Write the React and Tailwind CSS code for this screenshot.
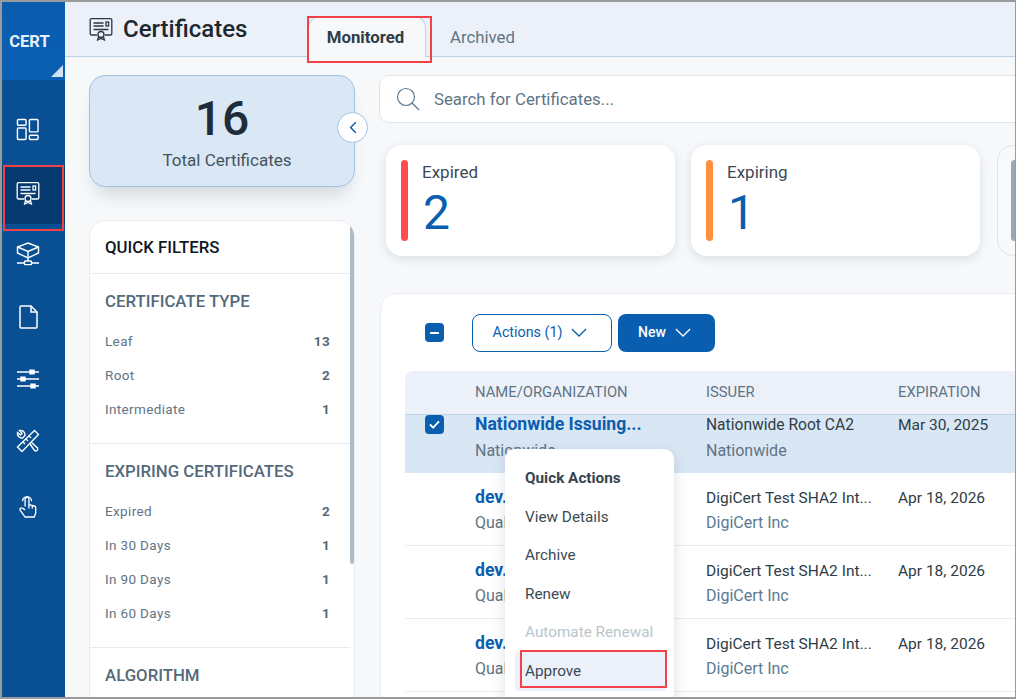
import React from "react";

const FONT = "font-['Roboto','Liberation_Sans',sans-serif]";

function CertIcon({ className }) {
  return (
    <svg viewBox="0 0 24 24" fill="none" stroke="currentColor" strokeWidth="1.3" className={className}>
      <path d="M8 18H2.5a1.3 1.3 0 0 1-1.3-1.3V3a1.3 1.3 0 0 1 1.3-1.3h19A1.3 1.3 0 0 1 22.8 3v13.7a1.3 1.3 0 0 1-1.3 1.3H16" />
      <path d="M4.5 6h10M4.5 9h10M4.5 12.5h15" />
      <rect x="17" y="5" width="2.6" height="4" />
      <circle cx="12" cy="17.5" r="3" />
      <path d="M9.6 19.5 8.6 23l3.4-1.5 3.4 1.5-1-3.5" />
    </svg>
  );
}

function DashIcon({ className }) {
  return (
    <svg viewBox="0 0 24 24" fill="none" stroke="currentColor" strokeWidth="1.5" className={className}>
      <rect x="1.5" y="1.5" width="9" height="6" rx="1" />
      <rect x="1.5" y="10.5" width="9" height="12" rx="1" />
      <rect x="14" y="1.5" width="9" height="13" rx="1" />
      <rect x="14" y="18" width="9" height="4.5" rx="1" />
    </svg>
  );
}

function NetworkIcon({ className }) {
  return (
    <svg viewBox="0 0 24 24" fill="none" stroke="currentColor" strokeWidth="1.4" className={className}>
      <path d="M12 1 22.5 5v6L12 16 1.5 11V5z" />
      <path d="M1.5 5 12 9.5 22.5 5M12 9.5V16" />
      <path d="M12 16v3" />
      <rect x="8.5" y="19" width="7" height="3.6" rx="0.8" />
      <path d="M1 21h7.5M15.5 21H23" />
    </svg>
  );
}

function FileIcon({ className }) {
  return (
    <svg viewBox="0 0 24 24" fill="none" stroke="currentColor" strokeWidth="1.5" className={className}>
      <path d="M5 1h10l6 6v15a1 1 0 0 1-1 1H5a1 1 0 0 1-1-1V2a1 1 0 0 1 1-1z" />
      <path d="M15 1v6h6" />
    </svg>
  );
}

function SlidersIcon({ className }) {
  return (
    <svg viewBox="0 0 24 24" fill="none" stroke="currentColor" strokeWidth="1.4" className={className}>
      <path d="M1 5h22M1 12h22M1 19h22" />
      <rect x="14" y="3.2" width="4" height="3.6" fill="currentColor" />
      <rect x="5" y="10.2" width="4" height="3.6" fill="currentColor" />
      <rect x="15" y="17.2" width="4" height="3.6" fill="currentColor" />
    </svg>
  );
}

function ToolsIcon({ className }) {
  return (
    <svg viewBox="0 0 24 24" fill="none" stroke="currentColor" strokeWidth="1.4" className={className}>
      <path d="M18.5 1.5 22.5 5.5 6 22.5 1.5 18z" />
      <path d="m7 13 2 2M10 10l2 2M13 7l2 2" />
      <path d="M9 6.5A4.5 4.5 0 0 0 3.5 1.5L6 4.5 4.5 6 1.5 3.5a4.5 4.5 0 0 0 5 5.5z" />
      <path d="m14 15 4.5 6.5a2 2 0 0 0 3-2.500L15.500 13.500" />
    </svg>
  );
}

function HandIcon({ className }) {
  return (
    <svg viewBox="0 0 20 26" fill="none" stroke="currentColor" strokeWidth="1.4" className={className}>
      <path d="M7 14V6.500a2 2 0 0 1 4 0V12l5.500 1.500a2 2 0 0 1 1.500 2V21l-1.500 4H7L2 18c-1-1.500.8-3.200 2.300-2.200L7 17.500" />
      <path d="M4.300 8.500a4.700 4.700 0 1 1 9.400 0" />
      <path d="M11 12v4M14.500 13v3" />
    </svg>
  );
}

function Chevron({ className }) {
  return (
    <svg viewBox="0 0 18 10" fill="none" stroke="currentColor" strokeWidth="1.4" className={className}>
      <path d="m1 1 8 8 8-8" />
    </svg>
  );
}

const navItems = [
  { icon: DashIcon, cls: "mt-[20px]", size: "w-[23px] h-[23px]" },
  { icon: CertIcon, cls: "mt-[8px] bg-[#063a70] pb-[4px]", size: "w-[24px] h-[24px]" },
  { icon: NetworkIcon, cls: "mt-[1px]", size: "w-[24px] h-[24px]" },
  { icon: FileIcon, cls: "mt-[5px]", size: "w-[24px] h-[24px]" },
  { icon: SlidersIcon, cls: "mt-[4px]", size: "w-[24px] h-[24px]" },
  { icon: ToolsIcon, cls: "mt-[4px]", size: "w-[24px] h-[24px]" },
  { icon: HandIcon, cls: "mt-[6px]", size: "w-[20px] h-[25px]" },
];

function Sidebar() {
  return (
    <div className="w-[63px] shrink-0 bg-[#084f93] flex flex-col">
      <div className="relative h-[78px] bg-gradient-to-b from-[#0a5cae] to-[#0a60b4] flex items-center justify-center">
        <span className="text-[16.5px] font-bold text-[#e8f0f8] mr-[8px] mt-[2px]">CERT</span>
        <div className="absolute right-[2px] bottom-[3px] w-0 h-0 border-l-[12px] border-l-transparent border-b-[12px] border-b-[#d3e2f2]" />
      </div>
      {navItems.map((item, i) => (
        <div key={i} className={`h-[58px] flex items-center justify-center pr-[12px] ${item.cls}`}>
          <item.icon className={`${item.size} text-white`} />
        </div>
      ))}
    </div>
  );
}

function Header() {
  return (
    <div className="h-[55px] shrink-0 bg-[#ecf1f9] border-b border-[#bcd3e9] flex items-end pl-[24px] relative">
      <div className="absolute left-[24px] top-[13px] flex items-center gap-[10px]">
        <CertIcon className="w-[24px] h-[24px] text-[#2c3640]" />
        <span className="text-[24px] leading-[28px] font-medium text-[#1d2730]">Certificates</span>
      </div>
      <div className="ml-[219px] w-[118px] h-[41px] -mb-px bg-[#f6f8fa] border border-b-0 border-[#bcd3e9] rounded-t-[12px] flex items-center justify-center text-[16.8px] font-bold text-[#2f3d47] pr-[3px] pt-[2px]">
        Monitored
      </div>
      <div className="ml-[24px] h-[40px] flex items-center text-[16.8px] text-[#5f7484] pt-[3px]">Archived</div>
    </div>
  );
}

const filterGroups = [
  {
    title: "CERTIFICATE TYPE",
    rows: [
      ["Leaf", 13],
      ["Root", 2],
      ["Intermediate", 1],
    ],
  },
  {
    title: "EXPIRING CERTIFICATES",
    rows: [
      ["Expired", 2],
      ["In 30 Days", 1],
      ["In 90 Days", 1],
      ["In 60 Days", 1],
    ],
  },
];

function LeftColumn() {
  return (
    <div className="w-[266px] shrink-0 relative">
      <div className="h-[112px] rounded-[16px] bg-[#dae7f5] border border-[#a3c2e2] shadow-[0_14px_18px_-8px_rgba(60,80,100,0.22)] flex flex-col items-center pt-[14px]">
        <div className="text-[48px] leading-[58px] font-medium text-[#1f2d3a]">16</div>
        <div className="mt-[2px] pl-[10px] text-[17px] leading-[20px] text-[#44535f]">Total Certificates</div>
      </div>
      <div className="absolute left-[248px] top-[37px] w-[31px] h-[31px] rounded-full bg-white border border-[#a3c2e2] flex items-center justify-center">
        <svg viewBox="0 0 10 16" fill="none" stroke="#0a5eb0" strokeWidth="1.8" className="w-[8px] h-[13px]">
          <path d="M8.500 1.500 2 8l6.500 6.500" />
        </svg>
      </div>

      <div className="relative mt-[33px] h-[500px] bg-white border border-[#e8ecf0] rounded-t-[16px] overflow-hidden">
        <div className="absolute right-0 top-0 w-[4px] h-[343px] bg-[#aebcc6] rounded-[2px]" />
        <div className="h-[53px] border-b border-[#e8ecf0] pl-[15px] pt-[2px] flex items-center text-[16.8px] font-medium text-[#10181f]">
          QUICK FILTERS
        </div>
        {filterGroups.map((g) => (
          <div key={g.title} className="border-b border-[#e8ecf0] mr-[4px] pl-[15px] pr-[20px] pt-[17px] pb-[17px]">
            <div className="text-[16.8px] leading-[20px] font-medium text-[#54697a] mb-[13px]">{g.title}</div>
            {g.rows.map(([label, n]) => (
              <div key={label} className="h-[34px] flex items-center justify-between text-[13.5px] tracking-[0.35px] text-[#5f7484]">
                <span>{label}</span>
                <span className="font-bold text-[#54697a]">{n}</span>
              </div>
            ))}
          </div>
        ))}
        <div className="pl-[15px] pt-[17px] text-[16.8px] leading-[20px] font-medium text-[#54697a]">ALGORITHM</div>
      </div>
    </div>
  );
}

function KpiCard({ label, value, bar }) {
  return (
    <div className="w-[289px] h-[111px] shrink-0 bg-white rounded-[16px] shadow-[0_3px_10px_rgba(60,80,100,0.14)] pl-[15px] flex items-center">
      <div className={`w-[7px] h-[81px] rounded-[4px] ${bar}`} />
      <div className="ml-[14px]">
        <div className="text-[17px] leading-[20px] text-[#3c4a55]">{label}</div>
        <div className="text-[48px] leading-[56px] font-normal text-[#0a5eb0] mt-[3px] -mb-[2px] pl-px">{value}</div>
      </div>
    </div>
  );
}

const rows = [
  { name: "dev.", org: "Qual", issuer: "DigiCert Test SHA2 Int...", issuerOrg: "DigiCert Inc", date: "Apr 18, 2026" },
  { name: "dev.", org: "Qual", issuer: "DigiCert Test SHA2 Int...", issuerOrg: "DigiCert Inc", date: "Apr 18, 2026" },
  { name: "dev.", org: "Qual", issuer: "DigiCert Test SHA2 Int...", issuerOrg: "DigiCert Inc", date: "Apr 18, 2026" },
];

const ROW_GRID = "grid grid-cols-[70px_231px_192px_1fr]";

function TableCard() {
  return (
    <div className="mt-[37px] ml-px w-[700px] h-[420px] bg-white border border-[#e8ecf0] rounded-t-[16px] pl-[24px]">
      <div className="h-[77px] flex items-center pl-[20px]">
        <div className="w-[19px] h-[19px] rounded-[4px] bg-[#0a5eb0] flex items-center justify-center">
          <div className="w-[9px] h-[2px] bg-white" />
        </div>
        <div className="ml-[28px] w-[140px] h-[38px] pr-[4px] rounded-[8px] border border-[#0a5eb0] bg-white text-[#0a5eb0] text-[14.3px] flex items-center justify-center gap-[9px]">
          Actions (1) <Chevron className="w-[16px] h-[9px]" />
        </div>
        <div className="ml-[6px] w-[97px] h-[38px] pr-[4px] rounded-[8px] bg-[#0a5eb0] text-white text-[14px] font-medium flex items-center justify-center gap-[9px]">
          New <Chevron className="w-[16px] h-[9px]" />
        </div>
      </div>
      <div className={`${ROW_GRID} h-[44px] items-center bg-[#ecf1f9] border-b border-[#bcd3e9] rounded-tl-[8px] text-[14.8px] text-[#5f7484]`}>
        <span />
        <span>NAME/ORGANIZATION</span>
        <span>ISSUER</span>
        <span>EXPIRATION</span>
      </div>
      <div className={`${ROW_GRID} h-[58px] bg-[#d9e6f4]`}>
        <div className="pl-[20px]">
          <div className="w-[19px] h-[19px] rounded-[4px] bg-[#0a5eb0] flex items-center justify-center">
            <svg viewBox="0 0 12 10" fill="none" stroke="white" strokeWidth="2" className="w-[11px] h-[9px]">
              <path d="m1 5 3.500 3.500L11 1.500" />
            </svg>
          </div>
        </div>
        <div className="-mt-px">
          <div className="text-[17.6px] leading-[20px] font-bold text-[#0a5eb0]">Nationwide Issuing...</div>
          <div className="mt-[7px] text-[16px] leading-[20px] text-[#5f7484]">Nationwide</div>
        </div>
        <div>
          <div className="text-[15.6px] leading-[20px] text-[#2f3d47]">Nationwide Root CA2</div>
          <div className="mt-[6px] text-[16px] leading-[20px] text-[#5f7484]">Nationwide</div>
        </div>
        <div className="text-[15.5px] leading-[20px] text-[#2f3d47]">Mar 30, 2025</div>
      </div>
      {rows.map((r, i) => (
        <div key={i} className={`${ROW_GRID} h-[73px] pt-[2px] items-center border-b border-[#e8ecf0]`}>
          <span />
          <div>
            <div className="-mt-px text-[17.6px] leading-[20px] font-bold text-[#0a5eb0]">{r.name}</div>
            <div className="mt-[6px] text-[16px] leading-[20px] text-[#5f7484]">{r.org}</div>
          </div>
          <div>
            <div className="text-[15.5px] leading-[20px] text-[#2f3d47]">{r.issuer}</div>
            <div className="mt-[5px] text-[16px] leading-[20px] text-[#5a7a93]">{r.issuerOrg}</div>
          </div>
          <div className="text-[15.5px] leading-[20px] text-[#2f3d47] -mt-[25px]">{r.date}</div>
        </div>
      ))}
    </div>
  );
}

function QuickActions() {
  const cls = "h-[38.5px] flex items-center pl-[10px] text-[15.3px]";
  return (
    <div className="absolute left-[503px] top-[447px] w-[169px] h-[260px] bg-white rounded-[10px] shadow-[0_4px_14px_rgba(60,80,100,0.18)] pt-[10.500px] pl-[10px] pr-[8px]">
      <div className={`${cls} text-[14.5px] font-bold text-[#36444f]`}>Quick Actions</div>
      <div className={`${cls} text-[#3c4a55]`}>View Details</div>
      <div className={`${cls} text-[#3c4a55]`}>Archive</div>
      <div className={`${cls} text-[#3c4a55]`}>Renew</div>
      <div className={`${cls} text-[#b9c5cd]`}>Automate Renewal</div>
      <div className={`${cls} bg-[#ebf0f9] rounded-[4px] text-[#3c4a55]`}>Approve</div>
    </div>
  );
}

export default function App() {
  return (
    <div className={`${FONT} relative w-[1016px] h-[699px] overflow-hidden bg-[#f6f8fa] border-t-2 border-l-2 border-b-2 border-r border-[#9b9b9b] flex`}>
      <Sidebar />
      <div className="flex-1 min-w-0 flex flex-col">
        <Header />
        <div className="flex pl-[24px] pt-[18px] gap-[24px]">
          <LeftColumn />
          <div className="w-[700px] shrink-0">
            <div className="h-[48px] bg-white border border-[#dfe5ea] rounded-[10px] flex items-center pl-[16px]">
              <svg viewBox="0 0 24 24" fill="none" stroke="#5a7a93" strokeWidth="1.2" className="w-[24px] h-[24px]">
                <circle cx="10" cy="10" r="8.500" />
                <path d="m16 16 7 7" />
              </svg>
              <span className="ml-[14px] pt-[2px] text-[16.8px] text-[#5f7484]">Search for Certificates...</span>
            </div>
            <div className="mt-[22px] ml-[7px] flex gap-[16px]">
              <KpiCard label="Expired" value="2" bar="bg-[#ff4d4f]" />
              <KpiCard label="Expiring" value="1" bar="bg-[#ff8f3c]" />
              <div className="w-[289px] h-[111px] shrink-0 ml-px bg-[#f8f9fa] border border-[#dfe5ea] rounded-[16px] pl-[13px] flex items-center">
                <div className="w-[7px] h-[81px] rounded-[4px] bg-[#9aa8b3]" />
              </div>
            </div>
            <TableCard />
          </div>
        </div>
      </div>
      <QuickActions />
      {/* red callouts from the doc screenshot */}
      <div className="absolute left-[1px] top-[163px] w-[61px] h-[66px] border-2 border-[#f04248]" />
      <div className="absolute left-[305px] top-[14px] w-[125px] h-[47px] border-2 border-[#f04248]" />
      <div className="absolute left-[518px] top-[648px] w-[147px] h-[38px] border-2 border-[#f04248]" />
    </div>
  );
}
